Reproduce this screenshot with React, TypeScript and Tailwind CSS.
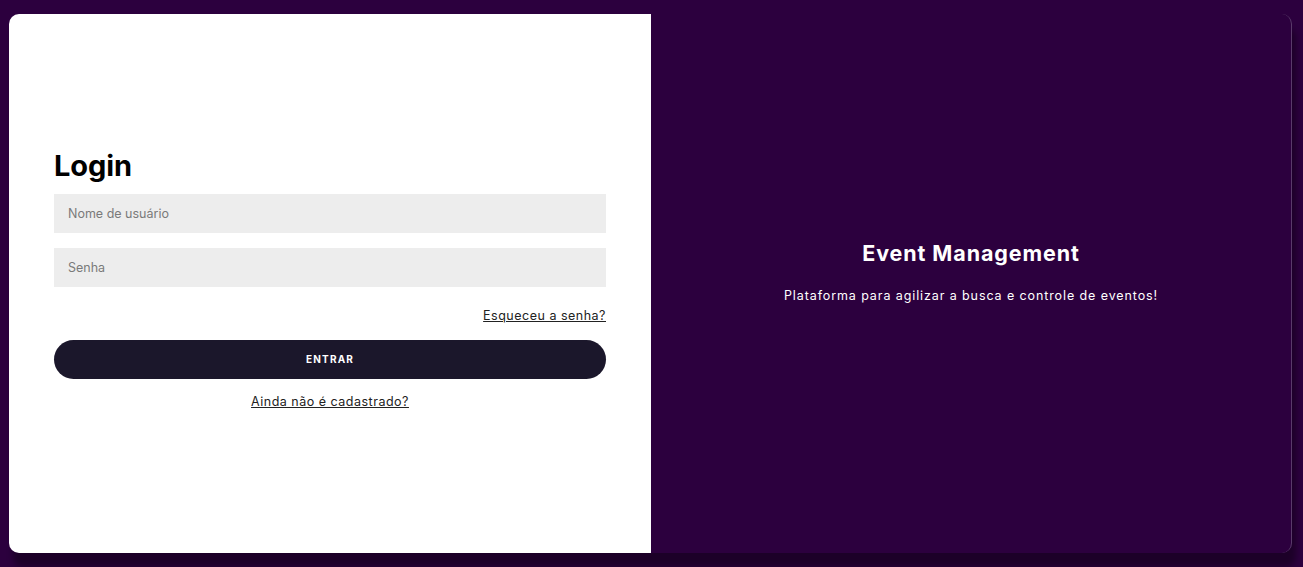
import React from "react";

export default function App() {
  return (
    <div
      className="w-[1303px] h-[567px] bg-[#2c003e] pt-[14px] pl-[9px] overflow-hidden"
      style={{ fontFamily: "Inter, 'Open Sans', sans-serif" }}
    >
      <div className="w-[1283px] h-[539px] flex rounded-[10px] shadow-[4px_14px_6px_rgba(0,0,0,0.35)]">
        <div className="w-[642px] bg-white rounded-l-[10px] flex flex-col justify-center px-[45px] pb-[8px]">
          <h1 className="text-[29px] font-bold text-black leading-[36px] tracking-[-0.1px] mb-[10px]">Login</h1>
          <input
            className="h-[39px] bg-[#ededed] px-[14px] text-[12.5px] text-[#333] placeholder:text-[#7a7a7a] outline-none"
            placeholder="Nome de usuário"
          />
          <input
            className="h-[39px] mt-[15px] bg-[#ededed] px-[14px] text-[12.5px] text-[#333] placeholder:text-[#7a7a7a] outline-none"
            placeholder="Senha"
            type="password"
          />
          <div className="flex justify-end mt-[20px]">
            <a className="text-[12.5px] text-[#222] underline leading-[18px] tracking-[0.5px]" href="#">Esqueceu a senha?</a>
          </div>
          <button className="h-[39px] mt-[15px] rounded-full bg-[#1b172b] text-white text-[10px] font-bold tracking-[1.2px]">
            ENTRAR
          </button>
          <div className="flex justify-center mt-[14px]">
            <a className="text-[12.5px] text-[#222] underline leading-[18px] tracking-[0.5px]" href="#">Ainda não é cadastrado?</a>
          </div>
        </div>
        <div className="flex-1 bg-[#2c003e] border-r border-[#5a3a6a] rounded-r-[10px] flex flex-col items-center justify-center text-white pb-[24px]">
          <h2 className="text-[21.5px] font-bold leading-[28px] tracking-[0.9px]">Event Management</h2>
          <p className="text-[12.5px] mt-[20px] leading-[18px] tracking-[0.9px]">Plataforma para agilizar a busca e controle de eventos!</p>
        </div>
      </div>
    </div>
  );
}
